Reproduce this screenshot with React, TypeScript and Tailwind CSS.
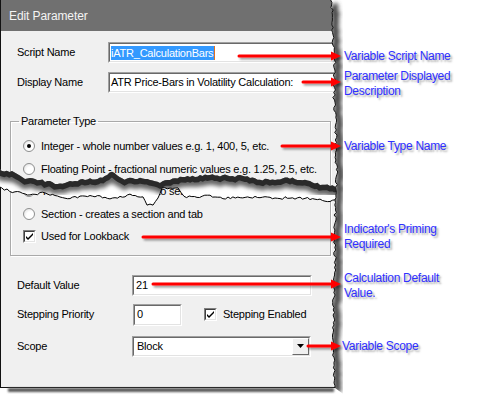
import React from "react";

type Pt = [number, number];

// small seeded random so the torn edges are the same on every render
function rng(seed: number) {
  let s = seed;
  return () => {
    s = (s * 16807) % 2147483647;
    return s / 2147483647;
  };
}

function jag(keys: Pt[], step: number, amp: number, seed: number): Pt[] {
  const r = rng(seed);
  const pts: Pt[] = [];
  for (let i = 0; i < keys.length - 1; i++) {
    const [a0, b0] = keys[i];
    const [a1, b1] = keys[i + 1];
    const n = Math.max(1, Math.round((a1 - a0) / step));
    for (let k = 0; k < n; k++) {
      const t = k / n;
      pts.push([a0 + (a1 - a0) * t, b0 + (b1 - b0) * t + (r() - 0.5) * amp]);
    }
  }
  pts.push(keys[keys.length - 1]);
  return pts;
}

const toPath = (pts: Pt[]) => pts.map((p, i) => `${i ? "L" : "M"}${p[0].toFixed(1)},${p[1].toFixed(1)}`).join(" ");

// right torn edge (y -> x)
const rightEdge: Pt[] = jag(
  [[0, 332], [40, 333], [60, 335], [100, 334], [130, 336], [160, 335], [172, 337], [200, 336], [230, 334], [260, 335], [300, 334], [340, 333], [388, 335]],
  2.5, 2.6, 11
).map(([y, x]) => [x, y]);

const topTear: Pt[] = jag(
  [[-1, 170], [12, 172], [25, 178], [45, 181], [60, 184], [80, 180], [100, 178], [112, 172], [122, 179], [140, 178], [160, 182], [180, 177], [215, 175], [240, 176], [265, 180], [290, 178], [310, 182], [325, 185], [340, 186]],
  2.5, 2.4, 5
);

const bottomTear: Pt[] = jag(
  [[-1, 188], [15, 192], [30, 195], [45, 193], [55, 196], [70, 198], [90, 195], [110, 198], [130, 195], [143, 198], [147, 205], [153, 205], [158, 197], [162, 188], [178, 188], [184, 197], [210, 196], [228, 198], [250, 197], [275, 198], [300, 198], [320, 200], [340, 201]],
  2.5, 2.6, 9
);

const rightEdgePath = toPath(rightEdge);
const rightRegion = `${rightEdgePath} L346,396 L346,0 Z`;
const gapRegion = `${toPath(topTear)} ${toPath([...bottomTear].reverse()).replace("M", "L")} Z`;

const arrows = [
  { y: 56, x: 239 },
  { y: 82, x: 303 },
  { y: 146, x: 282 },
  { y: 237, x: 143 },
  { y: 284, x: 153 },
  { y: 346, x: 308 },
];

function Field({ className, children }: { className: string; children?: React.ReactNode }) {
  return (
    <div className={className}>
      <div className="h-full border border-t-[#a0a0a0] border-l-[#a0a0a0] border-r-white border-b-white">
        <div className="h-full border border-t-[#696969] border-l-[#696969] border-r-[#e3e3e3] border-b-[#e3e3e3] bg-white flex items-center pl-[1px] overflow-hidden whitespace-nowrap">
          {children}
        </div>
      </div>
    </div>
  );
}

function Radio({ checked }: { checked?: boolean }) {
  return (
    <span className="w-[12px] h-[12px] rounded-full border border-[#8e8f8f] bg-[radial-gradient(circle_at_65%_65%,#ffffff_40%,#d8d8d8)] flex items-center justify-center shrink-0">
      {checked && <span className="w-[4px] h-[4px] rounded-full bg-black" />}
    </span>
  );
}

function Check() {
  return (
    <span className="w-[13px] h-[13px] border border-t-[#808080] border-l-[#808080] border-r-white border-b-white shrink-0">
      <span className="w-full h-full border border-t-[#404040] border-l-[#404040] border-r-[#e3e3e3] border-b-[#e3e3e3] bg-white flex items-center justify-center">
        <svg width="7" height="7" viewBox="0 0 7 7">
          <path d="M0 3 L2 5 L7 0 L7 2 L2 7 L0 5 Z" fill="#000" />
        </svg>
      </span>
    </span>
  );
}

function Note({ top, left, children }: { top: number; left: number; children: React.ReactNode }) {
  return (
    <div
      className="absolute text-[12px] leading-[15px] tracking-[-0.3px] text-[#2f2fff] [text-shadow:2px_2px_2px_rgba(0,0,0,0.35)]"
      style={{ top, left }}
    >
      {children}
    </div>
  );
}

export default function App() {
  return (
    <div className="relative w-[486px] h-[396px] bg-white overflow-hidden font-['Liberation_Sans',Arial,sans-serif] text-black">
      {/* dialog */}
      <div className="w-[345px] h-[388px] bg-[#f0f0f0] border-l border-b border-[#111] flex flex-col">
        <div className="h-[31px] shrink-0 bg-[#707070] text-[#f4f4f4] text-[12px] tracking-[-0.1px] pl-[8px] flex items-center">
          Edit Parameter
        </div>

        <div className="flex flex-col pl-[9px] pt-[11px] text-[11px] tracking-[-0.22px]">
          <div className="flex items-center h-[21px] pl-[7px]">
            <span className="w-[91px] shrink-0">Script Name</span>
            <Field className="flex-1 h-[21px]">
              <span className="bg-[#3399ff] text-white leading-[14px] pr-[1px] border-r border-[#e07020]">iATR_CalculationBars</span>
            </Field>
          </div>
          <div className="flex items-center h-[21px] pl-[7px] mt-[9px]">
            <span className="w-[91px] shrink-0">Display Name</span>
            <Field className="flex-1 h-[21px]">
              <span>ATR Price-Bars in Volatility Calculation:</span>
            </Field>
          </div>

          <fieldset className="w-[321px] mt-[21px] border border-[#a9a9a9] shadow-[inset_1px_1px_0_#ffffff,1px_1px_0_#ffffff] pl-[12px] pt-[7px] pb-[7px]">
            <legend className="ml-[-4px] px-[2px] leading-[14px]">Parameter Type</legend>
            <div className="flex flex-col">
              <div className="h-[22.5px] flex items-center gap-[6px]">
                <Radio checked />
                <span>Integer - whole number values e.g. 1, 400, 5, etc.</span>
              </div>
              <div className="h-[22.5px] flex items-center gap-[6px]">
                <Radio />
                <span className="whitespace-nowrap">Floating Point - fractional numeric values e.g. 1.25, 2.5, etc.</span>
              </div>
              <div className="h-[22.5px] flex items-center gap-[6px]">
                <Radio />
                <span className="whitespace-nowrap">Text List - a list of values to select from</span>
              </div>
              <div className="h-[22.5px] flex items-center gap-[6px]">
                <Radio />
                <span>Section - creates a section and tab</span>
              </div>
              <div className="h-[22.5px] flex items-center gap-[5px]">
                <Check />
                <span>Used for Lookback</span>
              </div>
            </div>
          </fieldset>

          <div className="flex items-center h-[21px] pl-[7px] mt-[19px]">
            <span className="w-[115px] shrink-0">Default Value</span>
            <Field className="w-[180px] h-[21px]">
              <span className="pl-[1px]">21</span>
            </Field>
          </div>
          <div className="flex items-center h-[22px] pl-[7px] mt-[8px]">
            <span className="w-[116px] shrink-0">Stepping Priority</span>
            <Field className="w-[49px] h-[22px]">
              <span className="pl-[1px]">0</span>
            </Field>
            <div className="ml-[22px] flex items-center gap-[6px]">
              <Check />
              <span>Stepping Enabled</span>
            </div>
          </div>
          <div className="flex items-center h-[21px] pl-[7px] mt-[10px]">
            <span className="w-[115px] shrink-0">Scope</span>
            <Field className="w-[179px] h-[21px]">
              <span className="flex-1 pl-[2px]">Block</span>
              <span className="w-[17px] h-full bg-[#f0f0f0] border border-t-white border-l-white border-r-[#696969] border-b-[#696969] flex items-center justify-center">
                <svg width="7" height="4" viewBox="0 0 7 4">
                  <path d="M0 0 H7 L3.5 4 Z" fill="#000" />
                </svg>
              </span>
            </Field>
          </div>
        </div>
      </div>

      {/* torn edges, shadows and callout arrows drawn over the dialog */}
      <svg className="absolute inset-0 pointer-events-none" width="486" height="396" viewBox="0 0 486 396">
        <defs>
          <filter id="blur2" x="-20%" y="-20%" width="140%" height="140%">
            <feGaussianBlur stdDeviation="2" />
          </filter>
          <filter id="blur1" x="-20%" y="-50%" width="140%" height="200%">
            <feGaussianBlur stdDeviation="1.2" />
          </filter>
          <filter id="drop" x="-10%" y="-100%" width="120%" height="300%">
            <feDropShadow dx="2" dy="2" stdDeviation="1.3" floodColor="#000" floodOpacity="0.4" />
          </filter>
          <clipPath id="rightClip">
            <path d={rightRegion} />
          </clipPath>
          <clipPath id="gapClip">
            <path d={gapRegion} />
          </clipPath>
        </defs>

        <path d={gapRegion} fill="#ffffff" />
        <g clipPath="url(#gapClip)">
          <path d={toPath(topTear)} transform="translate(0,4)" stroke="#666" strokeWidth="12" fill="none" filter="url(#blur2)" />
          <path d={toPath(topTear)} transform="translate(0,2)" stroke="#2a2a2a" strokeWidth="7" fill="none" />
        </g>
        <path d={toPath(bottomTear)} stroke="#000" strokeWidth="1" fill="none" />

        <path d={rightRegion} fill="#ffffff" />
        <rect x="8" y="388" width="326" height="4" fill="#5a5a5a" filter="url(#blur1)" />
        <g clipPath="url(#rightClip)">
          <path d={rightEdgePath} transform="translate(3,4)" stroke="#4a4a4a" strokeWidth="7" fill="none" filter="url(#blur2)" />
        </g>
        <path d={rightEdgePath} stroke="#111" strokeWidth="1" fill="none" />

        <g filter="url(#drop)">
          {arrows.map((a) => (
            <g key={a.y}>
              <line x1={a.x} y1={a.y} x2={332} y2={a.y} stroke="#ff0000" strokeWidth="3" strokeLinecap="round" />
              <path d={`M331,${a.y - 4.5} L341,${a.y} L331,${a.y + 4.5} Z`} fill="#ff0000" />
            </g>
          ))}
        </g>
      </svg>

      <Note top={49} left={344}>Variable Script Name</Note>
      <Note top={69} left={344}>
        Parameter Displayed
        <br />
        Description
      </Note>
      <Note top={139} left={344}>Variable Type Name</Note>
      <Note top={222} left={344}>
        Indicator's Priming
        <br />
        Required
      </Note>
      <Note top={271} left={344}>
        Calculation Default
        <br />
        Value.
      </Note>
      <Note top={339} left={342}>Variable Scope</Note>
    </div>
  );
}
